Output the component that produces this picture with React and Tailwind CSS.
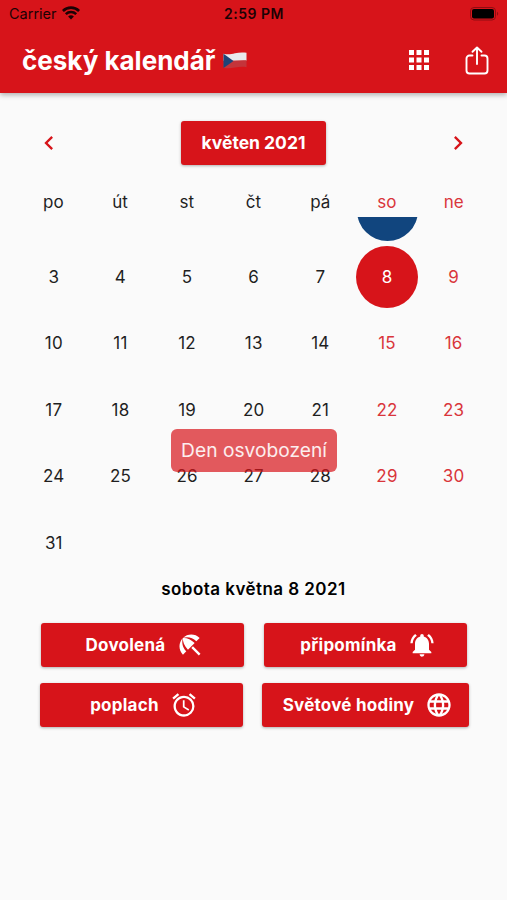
import React, { useState } from "react";
import clsx from "clsx";
import {
  MdAccessAlarm,
  MdApps,
  MdBeachAccess,
  MdChevronLeft,
  MdChevronRight,
  MdLanguage,
  MdNotificationsActive,
} from "react-icons/md";

const weekDays = ["po", "út", "st", "čt", "pá", "so", "ne"];

// the first week is scrolled half out of view, only its marker is left
const days = Array.from({ length: 29 }, (_, i) => i + 3);

function WifiIcon() {
  return (
    <svg viewBox="0 0 18 14" className="-mt-px h-[14px] w-[18px]" fill="none" stroke="#1c0204">
      <path d="M.9 5a11.6 11.6 0 0 1 16.2 0" strokeWidth="2.7" />
      <path d="M3.8 8.2a7.4 7.4 0 0 1 10.4 0" strokeWidth="2.5" />
      <path d="M9 13.5 6.1 10.6a4.1 4.1 0 0 1 5.8 0z" fill="#1c0204" stroke="none" />
    </svg>
  );
}

function BatteryIcon() {
  return (
    <svg viewBox="0 0 30 14" className="h-[14px] w-[30px]">
      <rect x="0.5" y="0.5" width="25" height="12.5" rx="3.5" fill="none" stroke="#8f0d12" />
      <rect x="2" y="2" width="22" height="9.5" rx="2" fill="#000" />
      <path d="M27 4.8c1.6.6 1.6 3.3 0 3.9z" fill="#8f0d12" />
    </svg>
  );
}

function FlagIcon() {
  return (
    <svg viewBox="0 0 24 17" className="h-[17px] w-[24px]">
      <path d="M.5 1.8C5 2.8 8 2.3 12 1.3S20 .2 23.5.8v8H.5z" fill="#e9e9ec" />
      <path d="M.5 9C8 9.6 15 7.8 23.5 8.3v6.9c-4-.8-7.5-.4-11.5.4s-7.5 1-11.5.4z" fill="#c4343a" />
      <path d="M.5 1.8 10.5 8.9.5 16z" fill="#1f4478" />
    </svg>
  );
}

function ShareIcon() {
  return (
    <svg
      viewBox="0 0 24 30"
      className="h-[30px] w-[24px]"
      fill="none"
      stroke="#fff"
      strokeWidth="1.9"
      strokeLinecap="round"
      strokeLinejoin="round"
    >
      <path d="M7.5 10.5H4.5a3 3 0 0 0-3 3v12a3 3 0 0 0 3 3h15a3 3 0 0 0 3-3v-12a3 3 0 0 0-3-3h-3" />
      <path d="M12 19V2.8M7.5 6.8 12 2.5 16.5 6.8" />
    </svg>
  );
}

function ActionButton({ label, icon: Icon, className }) {
  return (
    <button
      className={clsx(
        "flex h-[44px] items-center justify-center gap-[11px] rounded-[3px] bg-[#d7141a] text-[17px] font-bold tracking-[0.25px] text-white shadow-[0_1px_3px_rgba(0,0,0,0.3)]",
        className
      )}
    >
      <span className="pt-px">{label}</span>
      <Icon className="size-[28px]" />
    </button>
  );
}

function App() {
  const [selected, setSelected] = useState(8);

  return (
    <div className="relative h-[900px] w-[507px] overflow-hidden bg-[#fafafa] font-['Inter',sans-serif] text-[#1f1f1f]">
      <header className="h-[93px] bg-[#d7141a] shadow-[0_2px_5px_rgba(0,0,0,0.3)]">
        <div className="grid h-[27px] grid-cols-[1fr_80px_1fr] items-center pl-[8px] pr-[7px] text-[14px] text-[#1c0204]">
          <div className="flex items-center gap-[5px] pl-px">
            <span className="text-[14.5px]">Carrier</span>
            <WifiIcon />
          </div>
          <span className="text-center font-semibold tracking-[0.5px]">2:59 PM</span>
          <div className="flex justify-end">
            <BatteryIcon />
          </div>
        </div>
        <div className="flex h-[66px] items-center pl-[22px] pr-[18px] text-white">
          <h1 className="text-[26px] font-bold">český kalendář</h1>
          <div className="ml-[8px]">
            <FlagIcon />
          </div>
          <MdApps className="ml-auto mr-[31px] size-[30px]" />
          <ShareIcon />
        </div>
      </header>

      <div className="mt-[28px] flex h-[44px] items-center justify-between px-[35px]">
        <button>
          <MdChevronLeft className="size-[28px] text-[#d7141a]" />
        </button>
        <button className="h-[44px] w-[145px] rounded-[3px] bg-[#d7141a] text-[17.5px] font-bold text-white shadow-[0_1px_3px_rgba(0,0,0,0.3)]">
          květen 2021
        </button>
        <button>
          <MdChevronRight className="size-[28px] text-[#d7141a]" />
        </button>
      </div>

      <div className="mx-[20px] mt-[24px] grid h-[28px] grid-cols-7 text-center text-[17px] leading-[26px]">
        {weekDays.map((name, i) => (
          <span key={name} className={clsx(i > 4 && "text-[#d9353b]")}>
            {name}
          </span>
        ))}
      </div>

      <div className="mx-[20px] h-[360px] overflow-hidden">
        <div className="-mt-[40px] ml-[0.5px] grid grid-cols-7 text-[17px] tracking-[0.2px]">
          <div className="col-start-6 flex h-[66.6px] items-center justify-center">
            <span className="size-[61px] rounded-full bg-[#11457e]" />
          </div>
          <div />
          {days.map((day, i) => (
            <button
              key={day}
              onClick={() => setSelected(day)}
              className="flex h-[66.6px] items-center justify-center"
            >
              <span
                className={clsx(
                  "flex size-[62px] items-center justify-center rounded-full pt-px",
                  day === selected && "bg-[#d7141a] text-white",
                  day !== selected && i % 7 > 4 && "text-[#d9353b]"
                )}
              >
                {day}
              </span>
            </button>
          ))}
        </div>
      </div>

      <p className="h-[24px] text-center text-[17px] font-semibold leading-[24px] tracking-[0.45px] text-black">
        sobota května 8 2021
      </p>

      <div className="mt-[22px] flex flex-col gap-[16px]">
        <div className="flex gap-[20px] pl-[41px]">
          <ActionButton label="Dovolená" icon={MdBeachAccess} className="w-[203px] pl-[5px]" />
          <ActionButton label="připomínka" icon={MdNotificationsActive} className="w-[203px] pl-[5px]" />
        </div>
        <div className="flex gap-[19px] pl-[40px]">
          <ActionButton label="poplach" icon={MdAccessAlarm} className="w-[203px] pl-[5px]" />
          <ActionButton label="Světové hodiny" icon={MdLanguage} className="w-[207px] pl-[5px]" />
        </div>
      </div>

      {/* holiday toast */}
      <div className="absolute left-[171px] top-[429px] flex h-[43px] w-[166px] items-center justify-center rounded-[6px] bg-[#d7141a]/70 text-[19.2px] text-white/90">
        Den osvobození
      </div>
    </div>
  );
}

export default App;
